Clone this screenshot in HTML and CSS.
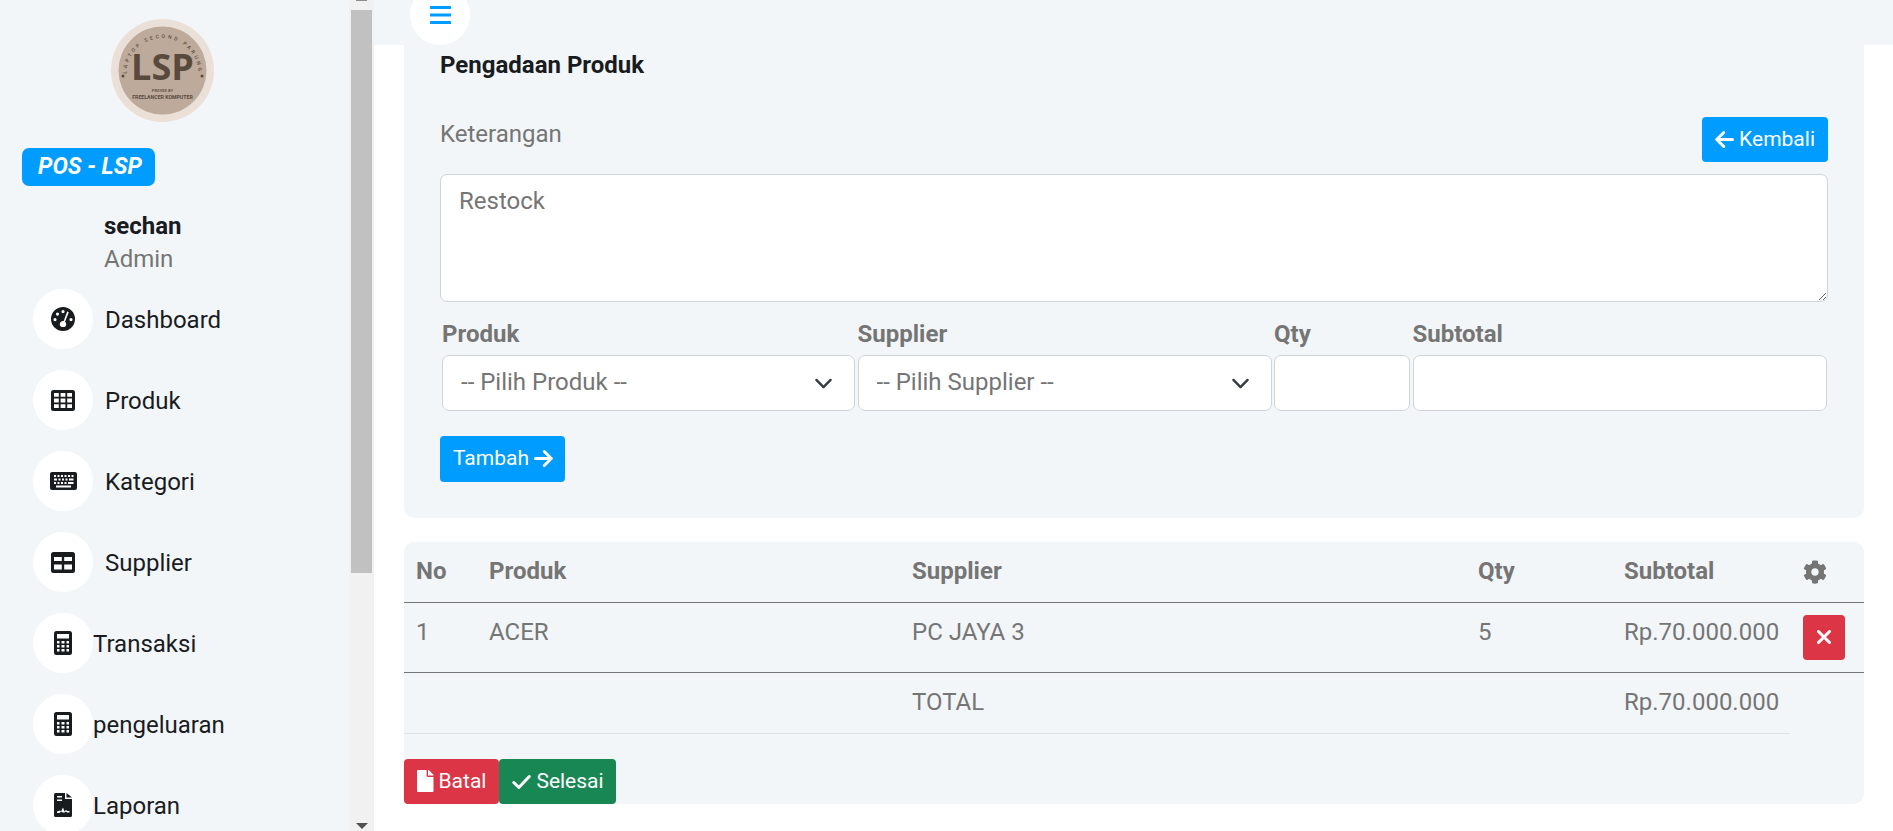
FILE: index.html
```html
<!DOCTYPE html>
<html lang="id">
<head>
<meta charset="utf-8">
<title>POS - LSP</title>
<link rel="stylesheet" href="styles.css">
</head>
<body>
<aside class="sidebar">
  <div class="side-content">
    <svg class="logo" viewBox="0 0 103 103" role="img" aria-label="LSP">
      <defs><path id="ring" d="M15.500 55 A36 36 0 1 1 87.500 55"/></defs>
      <circle cx="51.500" cy="51.500" r="51.500" fill="#ebe0d7"/>
      <circle cx="51.500" cy="51.500" r="44" fill="#bdaa9b"/>
      <text class="ring-text"><textPath href="#ring" startOffset="50%" text-anchor="middle">LAPTOP SECOND PARUNG</textPath></text>
      <circle cx="12" cy="57" r="1.500" fill="#5a4a3e"/>
      <circle cx="91" cy="57" r="1.500" fill="#5a4a3e"/>
      <text class="logo-main" x="51.500" y="61" text-anchor="middle">LSP</text>
      <text class="logo-small" x="51.500" y="72.500" text-anchor="middle">PROVED BY</text>
      <text class="logo-sub" x="51.500" y="80" text-anchor="middle">FREELANCER KOMPUTER</text>
    </svg>
    <div class="brand">POS - LSP</div>
    <div class="user">
      <div class="user-name">sechan</div>
      <div class="user-role">Admin</div>
    </div>
    <nav class="nav">
      <a class="nav-item"><span class="nav-icon"><svg class="ico-24" viewBox="0 0 24 24"><path fill-rule="evenodd" d="M12 0a12 12 0 1 1 0 24a12 12 0 0 1 0-24zM12 3a1.600 1.600 0 1 0 0 3.200a1.600 1.600 0 0 0 0-3.200zM6.500 5.500a1.600 1.600 0 1 0 0 3.200a1.600 1.600 0 0 0 0-3.200zM4 11a1.600 1.600 0 1 0 0 3.200a1.600 1.600 0 0 0 0-3.200zM20 11a1.600 1.600 0 1 0 0 3.200a1.600 1.600 0 0 0 0-3.200zM17.800 5.200l-1.600-.6L12.700 14.100a3.200 3.200 0 0 0-3.900 3.100c0 1.300.7 2.300 1.800 2.800h2.900c1.100-.5 1.700-1.500 1.700-2.800c0-1-.5-1.900-1.200-2.400z"/></svg></span><span class="nav-label">Dashboard</span></a>
      <a class="nav-item"><span class="nav-icon"><svg class="ico-24" viewBox="0 0 24 21"><path fill-rule="evenodd" d="M2.500 0h19a2.500 2.500 0 0 1 2.500 2.500v16a2.500 2.500 0 0 1-2.500 2.500h-19A2.500 2.500 0 0 1 0 18.500v-16A2.500 2.500 0 0 1 2.500 0zM3 3v3.800h4.800V3zM9.600 3v3.800h4.800V3zM16.200 3v3.800H21V3zM3 8.600v3.800h4.800V8.600zM9.600 8.600v3.800h4.800V8.600zM16.200 8.600v3.800H21V8.600zM3 14.200V18h4.800v-3.800zM9.600 14.200V18h4.800v-3.800zM16.200 14.200V18H21v-3.800z"/></svg></span><span class="nav-label">Produk</span></a>
      <a class="nav-item"><span class="nav-icon"><svg class="ico-kb" viewBox="0 0 27 18"><path fill-rule="evenodd" d="M2 0h23a2 2 0 0 1 2 2v14a2 2 0 0 1-2 2H2a2 2 0 0 1-2-2V2a2 2 0 0 1 2-2zM4 3v2h2V3zM7.500 3v2h2V3zM11 3v2h2V3zM14.500 3v2h2V3zM18 3v2h2V3zM21.500 3v2h2V3zM4 6.500v2h3v-2zM8.500 6.500v2h2v-2zM12 6.500v2h2v-2zM15.500 6.500v2h2v-2zM19 6.500v2h4.500v-2zM4 10v2h2v-2zM7.500 10v2h2v-2zM11 10v2h2v-2zM14.500 10v2h2v-2zM18 10v2h5.500v-2zM6 13.500V15.500h15v-2z"/></svg></span><span class="nav-label">Kategori</span></a>
      <a class="nav-item"><span class="nav-icon"><svg class="ico-24" viewBox="0 0 24 21"><path fill-rule="evenodd" d="M2.500 0h19a2.500 2.500 0 0 1 2.500 2.500v16a2.500 2.500 0 0 1-2.500 2.500h-19A2.500 2.500 0 0 1 0 18.500v-16A2.500 2.500 0 0 1 2.500 0zM3 5v4h7.800V5zM13.200 5v4H21V5zM3 12.500v5h7.800v-5zM13.200 12.500v5H21v-5z"/></svg></span><span class="nav-label">Supplier</span></a>
      <a class="nav-item nav-tight"><span class="nav-icon"><svg class="ico-calc" viewBox="0 0 18 24"><path fill-rule="evenodd" d="M2.500 0h13A2.500 2.500 0 0 1 18 2.500v19a2.500 2.500 0 0 1-2.500 2.500h-13A2.500 2.500 0 0 1 0 21.500v-19A2.500 2.500 0 0 1 2.500 0zM3 3v4.500h12V3zM3 10v2.500h2.500V10zM7.500 10v2.500h3V10zM12.500 10v2.500H15V10zM3 14v2.500h2.500V14zM7.500 14v2.500h3V14zM12.500 14v2.500H15V14zM3 18v2.500h2.500V18zM7.500 18v2.500h3V18zM12.500 18v2.500H15V18z"/></svg></span><span class="nav-label">Transaksi</span></a>
      <a class="nav-item nav-tight"><span class="nav-icon"><svg class="ico-calc" viewBox="0 0 18 24"><path fill-rule="evenodd" d="M2.500 0h13A2.500 2.500 0 0 1 18 2.500v19a2.500 2.500 0 0 1-2.500 2.500h-13A2.500 2.500 0 0 1 0 21.500v-19A2.500 2.500 0 0 1 2.500 0zM3 3v4.500h12V3zM3 10v2.500h2.500V10zM7.500 10v2.500h3V10zM12.500 10v2.500H15V10zM3 14v2.500h2.500V14zM7.500 14v2.500h3V14zM12.500 14v2.500H15V14zM3 18v2.500h2.500V18zM7.500 18v2.500h3V18zM12.500 18v2.500H15V18z"/></svg></span><span class="nav-label">pengeluaran</span></a>
      <a class="nav-item nav-tight"><span class="nav-icon"><svg class="ico-calc" viewBox="0 0 18 24"><path fill-rule="evenodd" d="M1.500 0H11v6h7v16.500a1.500 1.500 0 0 1-1.500 1.500h-15A1.500 1.500 0 0 1 0 22.500v-21A1.500 1.500 0 0 1 1.500 0zM3 3v1.500h5V3zM3 6.500V8h5V6.500zM3 18.500v1.500h2.500l1.500-1.500l1.500 1h2l1.500-1l1 1h2.500V18h-2l-1.500-1l-1.500 1.500l-1.500-4l-2 4l-1-1z"/><path d="M12.500 0l5.500 4.500H12.500z"/></svg></span><span class="nav-label">Laporan</span></a>
    </nav>
  </div>
  <div class="scrollbar">
    <span class="sb-top"></span>
    <span class="sb-thumb"></span>
    <span class="sb-arrow"></span>
  </div>
</aside>
<main class="main">
  <header class="topbar">
    <button class="toggle" type="button" aria-label="Menu">
      <svg viewBox="0 0 21 18" class="ico-bars"><path d="M1 0h19a1.500 1.500 0 0 1 0 3H1a1.500 1.500 0 0 1 0-3zM1 7.500h19a1.500 1.500 0 0 1 0 3H1a1.500 1.500 0 0 1 0-3zM1 15h19a1.500 1.500 0 0 1 0 3H1a1.500 1.500 0 0 1 0-3z"/></svg>
    </button>
  </header>
  <section class="card card-form">
    <h6 class="title">Pengadaan Produk</h6>
    <div class="desc-row">
      <label class="desc-label">Keterangan</label>
      <a class="btn btn-blue"><svg class="btn-ico stroke-ico" viewBox="0 0 19 19"><path d="M17.500 9.500H2M8.700 2.500L1.700 9.500l7 7"/></svg>Kembali</a>
    </div>
    <textarea class="area" placeholder="Restock">Restock</textarea>
    <div class="fields">
      <div class="field">
        <label class="field-label">Produk</label>
        <div class="select-wrap">
          <select class="control"><option>-- Pilih Produk --</option></select>
          <svg class="chev" viewBox="0 0 16 16"><path fill="none" stroke="#343a40" stroke-linecap="round" stroke-linejoin="round" stroke-width="2" d="M2 5l6 6 6-6"/></svg>
        </div>
      </div>
      <div class="field">
        <label class="field-label">Supplier</label>
        <div class="select-wrap">
          <select class="control"><option>-- Pilih Supplier --</option></select>
          <svg class="chev" viewBox="0 0 16 16"><path fill="none" stroke="#343a40" stroke-linecap="round" stroke-linejoin="round" stroke-width="2" d="M2 5l6 6 6-6"/></svg>
        </div>
      </div>
      <div class="field">
        <label class="field-label">Qty</label>
        <input class="control" type="text">
      </div>
      <div class="field">
        <label class="field-label">Subtotal</label>
        <input class="control" type="text">
      </div>
    </div>
    <a class="btn btn-blue btn-add">Tambah<svg class="btn-ico btn-ico-end stroke-ico" viewBox="0 0 19 19"><path d="M1.500 9.500H17M10.300 2.500l7 7-7 7"/></svg></a>
  </section>
  <section class="card card-table">
    <table class="table">
      <colgroup>
        <col class="c-no"><col class="c-prod"><col class="c-sup"><col class="c-qty"><col class="c-sub"><col class="c-act">
      </colgroup>
      <thead>
        <tr>
          <th>No</th><th>Produk</th><th>Supplier</th><th>Qty</th><th>Subtotal</th>
          <th class="act"><svg class="gear" viewBox="0 0 512 512"><path d="M487.400 315.700l-42.600-24.600c4.300-23.200 4.300-47 0-70.200l42.600-24.600c4.900-2.800 7.100-8.600 5.500-14-11.100-35.600-30-67.800-54.700-94.600-3.800-4.100-10-5.100-14.800-2.300L380.800 110c-17.900-15.400-38.500-27.300-60.800-35.100V25.800c0-5.600-3.900-10.500-9.400-11.700-36.700-8.200-74.300-7.800-109.200 0-5.500 1.200-9.400 6.100-9.400 11.700V75c-22.200 7.900-42.800 19.800-60.800 35.100L88.700 85.500c-4.900-2.800-11-1.900-14.800 2.300-24.700 26.700-43.600 58.900-54.700 94.600-1.700 5.400.6 11.200 5.500 14L67.300 221c-4.300 23.200-4.300 47 0 70.200l-42.600 24.600c-4.900 2.800-7.100 8.600-5.500 14 11.100 35.600 30 67.800 54.700 94.600 3.800 4.100 10 5.100 14.800 2.300l42.600-24.600c17.900 15.400 38.500 27.300 60.800 35.100v49.200c0 5.600 3.900 10.500 9.400 11.700 36.700 8.200 74.300 7.800 109.200 0 5.500-1.200 9.400-6.100 9.400-11.700v-49.200c22.200-7.900 42.800-19.800 60.800-35.100l42.600 24.600c4.900 2.800 11 1.900 14.800-2.300 24.700-26.700 43.600-58.900 54.700-94.600 1.500-5.500-.7-11.300-5.600-14.100zM256 336c-44.100 0-80-35.900-80-80s35.900-80 80-80 80 35.900 80 80-35.900 80-80 80z"/></svg></th>
        </tr>
      </thead>
      <tbody>
        <tr class="row-item">
          <td>1</td><td>ACER</td><td>PC JAYA 3</td><td>5</td><td>Rp.70.000.000</td>
          <td class="act"><a class="btn btn-red btn-x"><svg class="x-ico" viewBox="0 0 14 14"><path d="M1.500 1.500l11 11M12.500 1.500l-11 11"/></svg></a></td>
        </tr>
        <tr class="row-total">
          <td></td><td></td><td>TOTAL</td><td></td><td>Rp.70.000.000</td>
        </tr>
      </tbody>
    </table>
    <div class="actions">
      <a class="btn btn-red"><svg class="btn-ico ico-file" viewBox="0 0 384 512"><path d="M224 136V0H24C10.700 0 0 10.700 0 24v464c0 13.300 10.700 24 24 24h336c13.300 0 24-10.700 24-24V160H248c-13.200 0-24-10.800-24-24zm160-14.100v6.100H256V0h6.100c6.400 0 12.500 2.500 17 7l97.900 98c4.500 4.500 7 10.600 7 16.900z"/></svg>Batal</a>
      <a class="btn btn-green btn-done"><svg class="btn-ico stroke-ico" viewBox="0 0 19 19"><path d="M1.800 10.500l5 5L17.300 4.500"/></svg>Selesai</a>
    </div>
  </section>
</main>
</body>
</html>
```
FILE: styles.css
```css
* { box-sizing: border-box; }
html, body { height: 100%; }
body {
  margin: 0;
  height: 831px;
  overflow: hidden;
  display: flex;
  background: #fff;
  font-family: Roboto, "Liberation Sans", sans-serif;
  font-size: 24px;
  line-height: 1.25;
  color: #757575;
}

/* Sidebar */
.sidebar {
  flex: 0 0 374px;
  height: 831px;
  display: flex;
  overflow: hidden;
  background: #f3f6f9;
}
.side-content { flex: 0 0 349px; padding: 19px 0 0 33px; }
.logo { display: block; width: 103px; height: 103px; margin-left: 78px; }
.ring-text { font: 500 5px Roboto, sans-serif; letter-spacing: 2.600px; fill: #5a4a3e; }
.logo-main { font: 700 36px "Open Sans", Roboto, sans-serif; fill: #5a4a3e; }
.logo-small { font: 700 3.500px Roboto, sans-serif; fill: #5a4a3e; letter-spacing: .3px; }
.logo-sub { font: 700 5.200px Roboto, sans-serif; fill: #5a4a3e; }
.brand {
  width: 133px;
  height: 38px;
  margin: 26px 0 0 -11px;
  padding-left: 16px;
  border-radius: 7px;
  background: #009cff;
  color: #fff;
  font-size: 23px;
  font-style: italic;
  font-weight: 700;
  line-height: 38px;
}
.user { margin: 24px 0 0 71px; }
.user-name { color: #191c1f; font-weight: 700; line-height: 32px; }
.user-role { padding-top: 1px; line-height: 32px; }
.nav { margin-top: 14px; display: flex; flex-direction: column; gap: 21px; }
.nav-item { display: flex; align-items: center; color: #191c1f; }
.nav-label { padding-top: 2px; }
.nav-icon {
  flex: 0 0 60px;
  height: 60px;
  margin-right: 12px;
  border-radius: 50%;
  background: #fff;
  display: flex;
  align-items: center;
  justify-content: center;
}
.nav-tight .nav-icon { margin-right: 0; }
.ico-24 { width: 24px; height: auto; fill: #191c1f; display: block; }
.ico-kb { width: 27px; height: 18px; fill: #191c1f; display: block; }
.ico-calc { width: 18px; height: 24px; fill: #191c1f; display: block; }

.scrollbar {
  flex: 0 0 25px;
  background: #f1f1f1;
  display: flex;
  flex-direction: column;
  align-items: center;
}
.sb-top { width: 11px; height: 1px; background: #8c8c8c; }
.sb-thumb { width: 21px; height: 563px; margin-top: 9px; background: #c1c1c1; }
.sb-arrow {
  margin-top: 250px;
  width: 0;
  height: 0;
  border-left: 6px solid transparent;
  border-right: 6px solid transparent;
  border-top: 6px solid #505050;
}

/* Main */
.main { flex: 1; min-width: 0; padding-right: 29px; }
.topbar {
  display: flex;
  height: 45px;
  margin-right: -29px;
  padding-left: 36px;
  background: #f3f6f9;
}
.toggle {
  display: flex;
  align-items: center;
  justify-content: center;
  flex: none;
  width: 60px;
  height: 60px;
  margin-top: -15px;
  padding: 0;
  border: 0;
  border-radius: 50%;
  background: #fff;
}
.ico-bars { width: 21px; height: 18px; fill: #009cff; display: block; }

.card { margin-left: 30px; background: #f3f6f9; border-radius: 0 0 10px 10px; }
.card-form { height: 473px; padding: 1px 36px 0; }
.title { margin: 0; padding-top: 4px; color: #191c1f; font-size: 24px; font-weight: 700; line-height: 30px; }
.desc-row { display: flex; justify-content: space-between; margin-top: 37px; }
.desc-label { line-height: 30px; margin-top: 2px; }
.area {
  display: block;
  width: 100%;
  height: 128px;
  margin-top: 12px;
  padding: 12px 18px 7px;
  border: 1px solid #ced4da;
  border-radius: 7px;
  background: #fff;
  color: #757575;
  font: inherit;
  line-height: 29px;
}
.fields {
  display: grid;
  grid-template-columns: 413px 414px 136px 414.500px;
  column-gap: 2.500px;
  margin: 14px 0 0 2px;
}
.field-label { display: block; font-weight: 700; line-height: 36px; }
.select-wrap { position: relative; }
.control {
  display: block;
  width: 100%;
  height: 56px;
  margin-top: 2.500px;
  padding: 0 18px 2px;
  border: 1px solid #ced4da;
  border-radius: 7px;
  background: #fff;
  color: #757575;
  font: inherit;
  appearance: none;
}
.chev { position: absolute; top: 19px; right: 22px; width: 19px; height: 19px; pointer-events: none; }

.btn {
  display: inline-flex;
  align-items: center;
  height: 45px;
  padding: 0 13px;
  border-radius: 4px;
  color: #fff;
  font-size: 21px;
}
.btn-blue { background: #009cff; }
.btn-red { background: #dc3545; }
.btn-green { background: #198754; }
.btn-add { margin-top: 25px; height: 46px; padding-right: 12px; }
.btn-done { padding-right: 12px; }
.btn-ico { width: 19px; height: 21px; margin-right: 5px; fill: #fff; flex: none; }
.btn-ico-end { margin: 0 0 0 5px; }
.stroke-ico { height: 19px; fill: none; stroke: #fff; stroke-width: 3; stroke-linecap: round; stroke-linejoin: round; }
.ico-file { width: 16.500px; height: 22px; }
.btn-x { width: 42px; padding: 0; justify-content: center; }
.x-ico { width: 14px; height: 14px; fill: none; stroke: #fff; stroke-width: 3; stroke-linecap: round; }

/* Table */
.card-table { height: 262px; margin-top: 24px; border-radius: 10px; }
.table { width: 100%; table-layout: fixed; border-collapse: collapse; }
.c-no { width: 72px; }
.c-prod { width: 423px; }
.c-sup { width: 566px; }
.c-qty { width: 146px; }
.c-sub { width: 179px; }
.c-act { width: 74px; }
.table th, .table td { padding: 14px 12px 12px 13px; text-align: left; vertical-align: top; line-height: 30px; }
.table th:first-child, .table td:first-child { padding-left: 12px; }
.table th { height: 60px; font-weight: 700; border-bottom: 1px solid #757575; }
.row-item td { height: 70px; border-bottom: 1px solid #757575; }
.row-total td { height: 61px; border-bottom: 1px solid #dee2e6; }
.table .act { padding: 12px 0 0 13px; }
.gear { display: block; width: 24px; height: 24px; fill: #757575; margin-top: 6px; }
.actions { display: flex; margin-top: 25px; }
```
